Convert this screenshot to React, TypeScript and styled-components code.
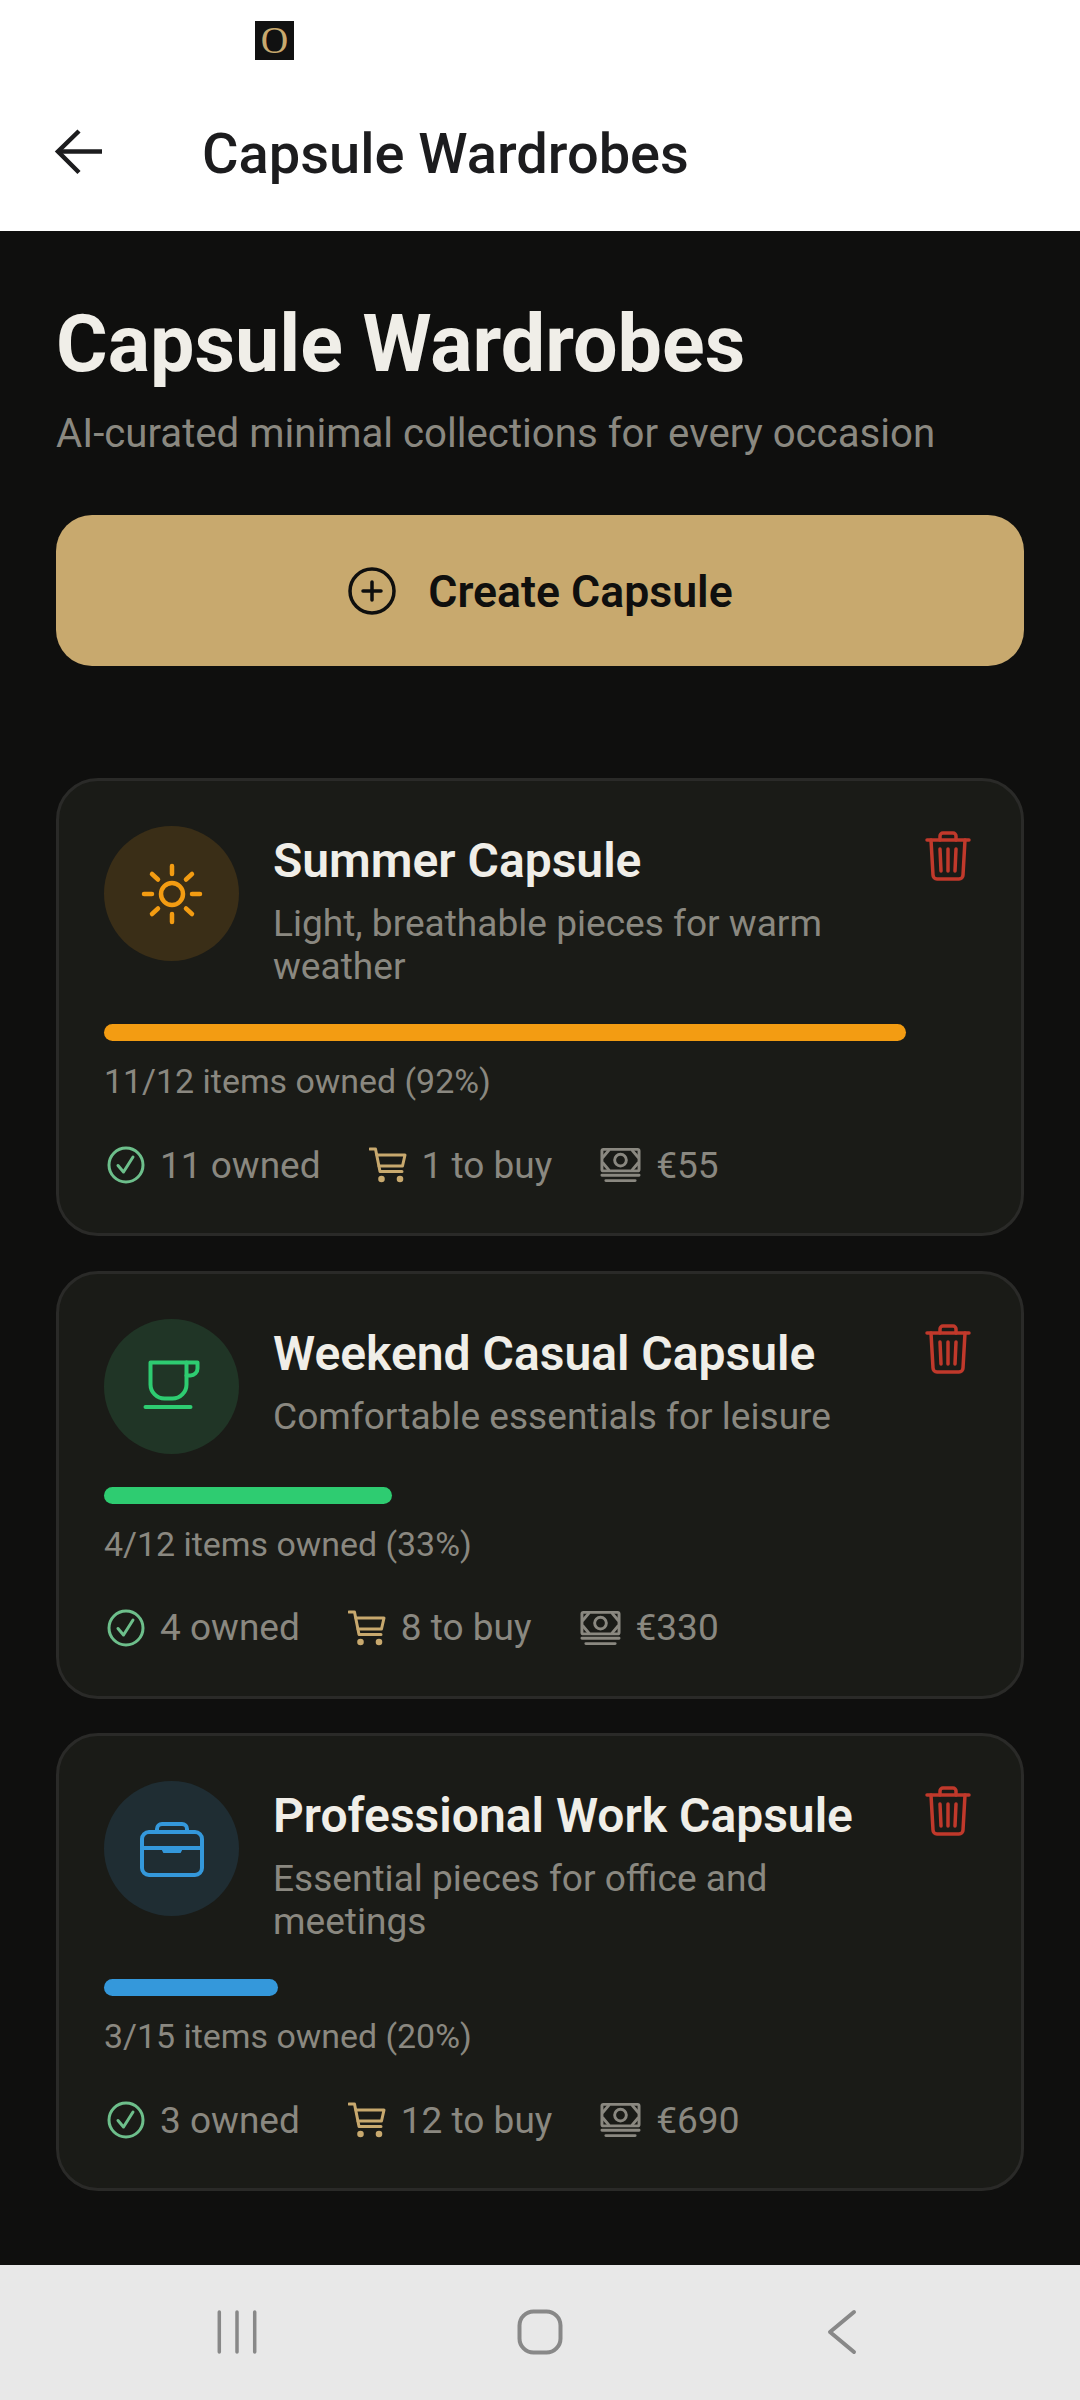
import React from "react";
import styled, { createGlobalStyle } from "styled-components";

const Global = createGlobalStyle`
  html, body { margin: 0; padding: 0; background: #0f0f0e; }
  * { box-sizing: border-box; }
  body { font-family: Roboto, "Liberation Sans", sans-serif; }
`;

const Screen = styled.div`
  width: 1080px;
  height: 2400px;
  display: flex;
  flex-direction: column;
  background: #0f0f0e;
  overflow: hidden;
`;
const TopArea = styled.header`
  height: 231px;
  flex: none;
  background: #fff;
  display: flex;
  flex-direction: column;
`;
const StatusBar = styled.div`
  height: 106px;
  padding: 21px 0 0 255px;
`;
const StatusApp = styled.div`
  width: 39px;
  height: 39px;
  background: #111;
  color: #c8a96e;
  font: 400 38px/39px "Liberation Serif", serif;
  text-align: center;
`;
const AppBar = styled.div`
  display: flex;
  align-items: center;
  height: 96px;
  padding-left: 53px;
`;
const BackIcon = styled.svg`
  width: 52px;
  height: 52px;
  margin-right: 97px;
  flex: none;
`;
const AppTitle = styled.div`
  font-size: 56px;
  font-weight: 500;
  color: #1c1c1e;
`;
const Main = styled.main`
  flex: 1;
  padding: 0 56px;
  display: flex;
  flex-direction: column;
`;
const Heading = styled.h1`
  margin: 71px 0 0;
  font-size: 79px;
  line-height: 84px;
  font-weight: 700;
  color: #f0eee8;
`;
const Sub = styled.p`
  margin: 25px 0 0;
  font-size: 40.2px;
  line-height: 46px;
  color: #8a8880;
`;
const CreateButton = styled.button`
  margin-top: 58px;
  height: 151px;
  width: 968px;
  flex: none;
  border: 0;
  padding: 3px 0 0 1px;
  border-radius: 36px;
  background: #c8a96e;
  color: #0f0f0e;
  font: 600 44.6px Roboto, sans-serif;
  display: flex;
  align-items: center;
  justify-content: center;
  gap: 32px;
`;
const PlusIcon = styled.svg`
  width: 48px;
  height: 48px;
  flex: none;
  margin-top: -3px;
`;
const List = styled.div`
  margin-top: 112px;
  display: flex;
  flex-direction: column;
  gap: 34.5px;
`;
const Card = styled.section`
  background: #1a1b17;
  border: 3px solid #2a2a28;
  border-radius: 42px;
  padding: 45px;
`;
const TopRow = styled.div`
  display: flex;
  align-items: flex-start;
  margin-bottom: 33px;
`;
const IconCircle = styled.div<{ $bg: string }>`
  width: 135px;
  height: 135px;
  flex: none;
  border-radius: 50%;
  background: ${(p) => p.$bg};
  display: flex;
  align-items: center;
  justify-content: center;
  margin-right: 34px;
`;
const Info = styled.div`
  flex: 1;
  min-width: 0;
  padding-top: 8px;
  padding-bottom: 3px;
`;
const Title = styled.h2`
  margin: 0 0 14px;
  font-size: 48px;
  line-height: 54px;
  font-weight: 600;
  color: #f0eee8;
`;
const Desc = styled.p`
  margin: 0;
  font-size: 37.1px;
  line-height: 43px;
  color: #8a8880;
`;
const TrashIcon = styled.svg`
  width: 50px;
  height: 54px;
  flex: none;
  margin: 3px 3px 0 28px;
`;
const Track = styled.div`
  height: 17px;
  width: 872px;
`;
const Fill = styled.div<{ $color: string }>`
  height: 100%;
  border-radius: 9px;
  background: ${(p) => p.$color};
`;
const Progress = styled.div`
  margin-top: 21px;
  font-size: 33.9px;
  line-height: 40px;
  color: #8a8880;
`;
const Stats = styled.div`
  margin-top: 40px;
  display: flex;
  align-items: center;
  gap: 48px;
  height: 46px;
`;
const Stat = styled.div`
  display: flex;
  align-items: center;
  gap: 15px;
  font-size: 37px;
  color: #8a8880;
  margin-left: 3px;
  & + & { margin-left: 0; }
`;
const NavBar = styled.nav`
  height: 135px;
  flex: none;
  background: #e8e8e8;
  display: flex;
  align-items: center;
  justify-content: space-between;
  padding: 0 208px 2px 207px;
`;
const NavIcon = styled.svg`
  width: 60px;
  height: 60px;
  display: block;
`;

const Sun = () => (
  <svg width="80" height="80" viewBox="0 0 80 80" fill="none" stroke="#f39c12" strokeWidth="4.5" strokeLinecap="round">
    <circle cx="40" cy="40" r="11" />
    <path d="M40 12v8M40 60v8M12 40h8M60 40h8M20 20l6 5.5M54 54.5l6 5.5M20 60l6-5.5M54 25.5l6-5.5" />
  </svg>
);
const Cup = () => (
  <svg width="80" height="80" viewBox="0 0 80 80" fill="none" stroke="#2ecc71" strokeWidth="4" strokeLinecap="round" strokeLinejoin="round">
    <path d="M18.5 16.5h36v22a14 14 0 0 1-14 14H32.5a14 14 0 0 1-14-14z" />
    <path d="M54.5 16.5h11v6a7 7 0 0 1-7 7h-4" />
    <path d="M13.5 61h45" />
  </svg>
);
const Briefcase = () => (
  <svg width="80" height="80" viewBox="0 0 80 80" fill="none" stroke="#3498db" strokeWidth="4" strokeLinecap="round" strokeLinejoin="round">
    <rect x="10" y="23" width="60" height="43" rx="7" />
    <path d="M25 23v-3a5 5 0 0 1 5-5h20a5 5 0 0 1 5 5v3" />
    <path d="M10 39h60" />
    <path d="M30 39h20l-2 4H32z" fill="#3498db" strokeWidth="2" />
  </svg>
);
const Trash = () => (
  <TrashIcon viewBox="0 0 50 54" fill="none" stroke="#c0392b" strokeWidth="3.5" strokeLinecap="round" strokeLinejoin="round">
    <path d="M4 11h42" />
    <path d="M17 11V7a3 3 0 0 1 3-3h10a3 3 0 0 1 3 3v4" />
    <path d="M8 11l2 35a4 4 0 0 0 4 4h22a4 4 0 0 0 4-4l2-35" />
    <path d="M17 20l1 22M25 20v22M33 20l-1 22" />
  </TrashIcon>
);
const Check = () => (
  <svg width="38" height="38" viewBox="0 0 38 38" fill="none" stroke="#6dbf8b" strokeWidth="3" strokeLinecap="round" strokeLinejoin="round">
    <circle cx="19" cy="19" r="17" />
    <path d="M11 19.5l5.5 6.5L26 11" />
  </svg>
);
const Cart = () => (
  <svg width="38" height="36" viewBox="0 0 38 36" fill="none" stroke="#c8a96e" strokeWidth="3" strokeLinecap="round" strokeLinejoin="round">
    <path d="M1 2h5.5L11 24.5h22" />
    <path d="M8 8h28l-2.5 11H10" />
    <circle cx="12.5" cy="32" r="1.8" fill="#c8a96e" />
    <circle cx="31" cy="32" r="1.8" fill="#c8a96e" />
  </svg>
);
const Money = () => (
  <svg width="41" height="36" viewBox="0 0 42 36" fill="none" stroke="#8a8880" strokeWidth="3" strokeLinecap="round" strokeLinejoin="round">
    <rect x="2" y="2" width="38" height="22" rx="1.5" />
    <circle cx="21" cy="13" r="6" />
    <path d="M3 10l6-7M33 3l6 7M3 16l6 7M33 23l6-7" />
    <path d="M2 28.5h38M6 34h30" />
  </svg>
);

type CapsuleData = {
  name: string;
  desc: string;
  tint: string;
  color: string;
  icon: React.ReactNode;
  pct: number;
  progress: string;
  owned: string;
  toBuy: string;
  price: string;
};

const capsules: CapsuleData[] = [
  { name: "Summer Capsule", desc: "Light, breathable pieces for warm weather", tint: "#3a2e17", color: "#f39c12", icon: <Sun />, pct: 92, progress: "11/12 items owned (92%)", owned: "11 owned", toBuy: "1 to buy", price: "€55" },
  { name: "Weekend Casual Capsule", desc: "Comfortable essentials for leisure", tint: "#203526", color: "#2ecc71", icon: <Cup />, pct: 33, progress: "4/12 items owned (33%)", owned: "4 owned", toBuy: "8 to buy", price: "€330" },
  { name: "Professional Work Capsule", desc: "Essential pieces for office and meetings", tint: "#1f2d33", color: "#3498db", icon: <Briefcase />, pct: 20, progress: "3/15 items owned (20%)", owned: "3 owned", toBuy: "12 to buy", price: "€690" },
];

export default function App() {
  return (
    <Screen>
      <Global />
      <TopArea>
        <StatusBar>
          <StatusApp>O</StatusApp>
        </StatusBar>
        <AppBar>
          <BackIcon viewBox="0 0 52 52" fill="none" stroke="#1c1c1e" strokeWidth="4.5">
            <path d="M6 23.5h43" />
            <path d="M26 3L5 23.5l21 21" />
          </BackIcon>
          <AppTitle>Capsule Wardrobes</AppTitle>
        </AppBar>
      </TopArea>
      <Main>
        <Heading>Capsule Wardrobes</Heading>
        <Sub>AI-curated minimal collections for every occasion</Sub>
        <CreateButton>
          <PlusIcon viewBox="0 0 48 48" fill="none" stroke="#0f0f0e" strokeWidth="3.5" strokeLinecap="round">
            <circle cx="24" cy="24" r="22" />
            <path d="M24 15v18M15 24h18" />
          </PlusIcon>
          Create Capsule
        </CreateButton>
        <List>
          {capsules.map((c) => (
            <Card key={c.name}>
              <TopRow>
                <IconCircle $bg={c.tint}>{c.icon}</IconCircle>
                <Info>
                  <Title>{c.name}</Title>
                  <Desc>{c.desc}</Desc>
                </Info>
                <Trash />
              </TopRow>
              <Track>
                <Fill $color={c.color} style={{ width: `${c.pct}%` }} />
              </Track>
              <Progress>{c.progress}</Progress>
              <Stats>
                <Stat><Check />{c.owned}</Stat>
                <Stat><Cart />{c.toBuy}</Stat>
                <Stat><Money />{c.price}</Stat>
              </Stats>
            </Card>
          ))}
        </List>
      </Main>
      <NavBar>
        <NavIcon viewBox="0 0 60 60" fill="none" stroke="#888" strokeWidth="3.5" strokeLinecap="round">
          <path d="M12.3 10v40M30 10v40M47.7 10v40" />
        </NavIcon>
        <NavIcon viewBox="0 0 60 60" fill="none" stroke="#888" strokeWidth="4">
          <rect x="9.5" y="9.5" width="41" height="41" rx="14" />
        </NavIcon>
        <NavIcon viewBox="0 0 60 60" fill="none" stroke="#888" strokeWidth="4" strokeLinecap="round" strokeLinejoin="round">
          <path d="M42 10L18 30l24 20" />
        </NavIcon>
      </NavBar>
    </Screen>
  );
}
